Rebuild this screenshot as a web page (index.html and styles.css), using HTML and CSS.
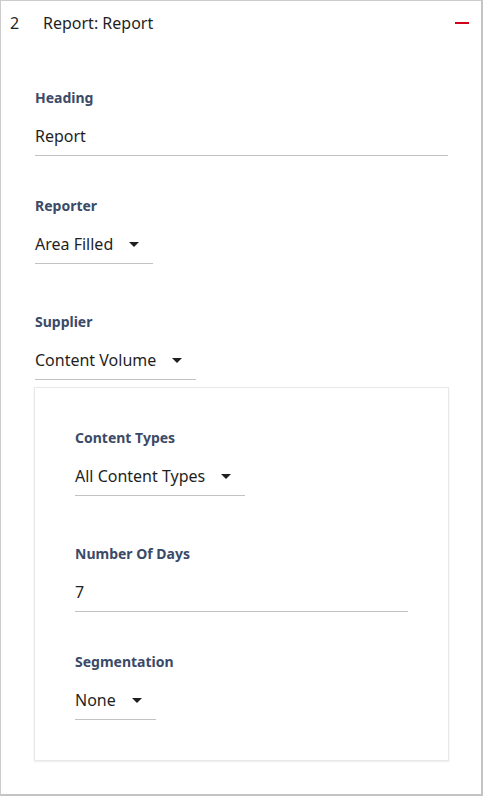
FILE: index.html
```html
<!DOCTYPE html>
<html lang="en">
<head>
<meta charset="utf-8">
<title>Report</title>
<link rel="stylesheet" href="styles.css">
</head>
<body>
<div class="card">
  <div class="card-header">
    <span class="index">2</span>
    <span class="title">Report: Report</span>
    <span class="collapse" aria-label="Collapse"></span>
  </div>
  <div class="card-body">
    <div class="field">
      <div class="label">Heading</div>
      <div class="input">Report</div>
    </div>
    <div class="field dropdown-field">
      <div class="label">Reporter</div>
      <div class="select"><span>Area Filled</span><span class="caret"></span></div>
    </div>
    <div class="field dropdown-field">
      <div class="label">Supplier</div>
      <div class="select"><span>Content Volume</span><span class="caret"></span></div>
    </div>
    <div class="subpanel">
      <div class="field dropdown-field">
        <div class="label">Content Types</div>
        <div class="select"><span>All Content Types</span><span class="caret"></span></div>
      </div>
      <div class="field">
        <div class="label">Number Of Days</div>
        <div class="input">7</div>
      </div>
      <div class="field dropdown-field">
        <div class="label">Segmentation</div>
        <div class="select"><span>None</span><span class="caret"></span></div>
      </div>
    </div>
  </div>
</div>
</body>
</html>
```
FILE: styles.css
```css
html, body {
  margin: 0;
  padding: 0;
  background: #ffffff;
}
body {
  font-family: "Noto Sans", "Open Sans", sans-serif;
  color: #1f1f1f;
}
.card {
  box-sizing: border-box;
  width: 483px;
  height: 796px;
  border: 1px solid #cccccc;
  border-right-width: 2px;
  border-bottom-width: 2px;
  border-right-color: #c4c4c4;
  border-bottom-color: #c4c4c4;
  background: #fff;
}
.card-header {
  display: flex;
  align-items: center;
  height: 43px;
  padding: 0 12px 0 9px;
  font-size: 16px;
  line-height: 24px;
}
.index {
  width: 33px;
}
.title {
  flex: 1;
}
.collapse {
  width: 14px;
  height: 2px;
  background: #d0021b;
}
.card-body {
  padding: 4px 33px 0 34px;
}
.field {
  padding-top: 40px;
}
.dropdown-field {
  margin-bottom: 8px;
}
.label {
  font-size: 14px;
  line-height: 20px;
  font-weight: 700;
  color: #3b4a67;
}
.input {
  margin-top: 16px;
  font-size: 16px;
  line-height: 24px;
  padding-bottom: 7px;
  border-bottom: 1px solid #c2c2c2;
}
.select {
  margin-top: 16px;
  display: inline-flex;
  align-items: center;
  font-size: 16px;
  line-height: 24px;
  padding: 0 14px 7px 0;
  border-bottom: 1px solid #c2c2c2;
}
.caret {
  margin-left: 16px;
  width: 0;
  height: 0;
  border-left: 5px solid transparent;
  border-right: 5px solid transparent;
  border-top: 5px solid #1f1f1f;
}
.subpanel {
  margin: -1px -1px 0 -1px;
  padding: 0 40px 32px 40px;
  border: 1px solid #e8e8e8;
  box-shadow: 0 1px 2px rgba(0, 0, 0, 0.08);
}
```
